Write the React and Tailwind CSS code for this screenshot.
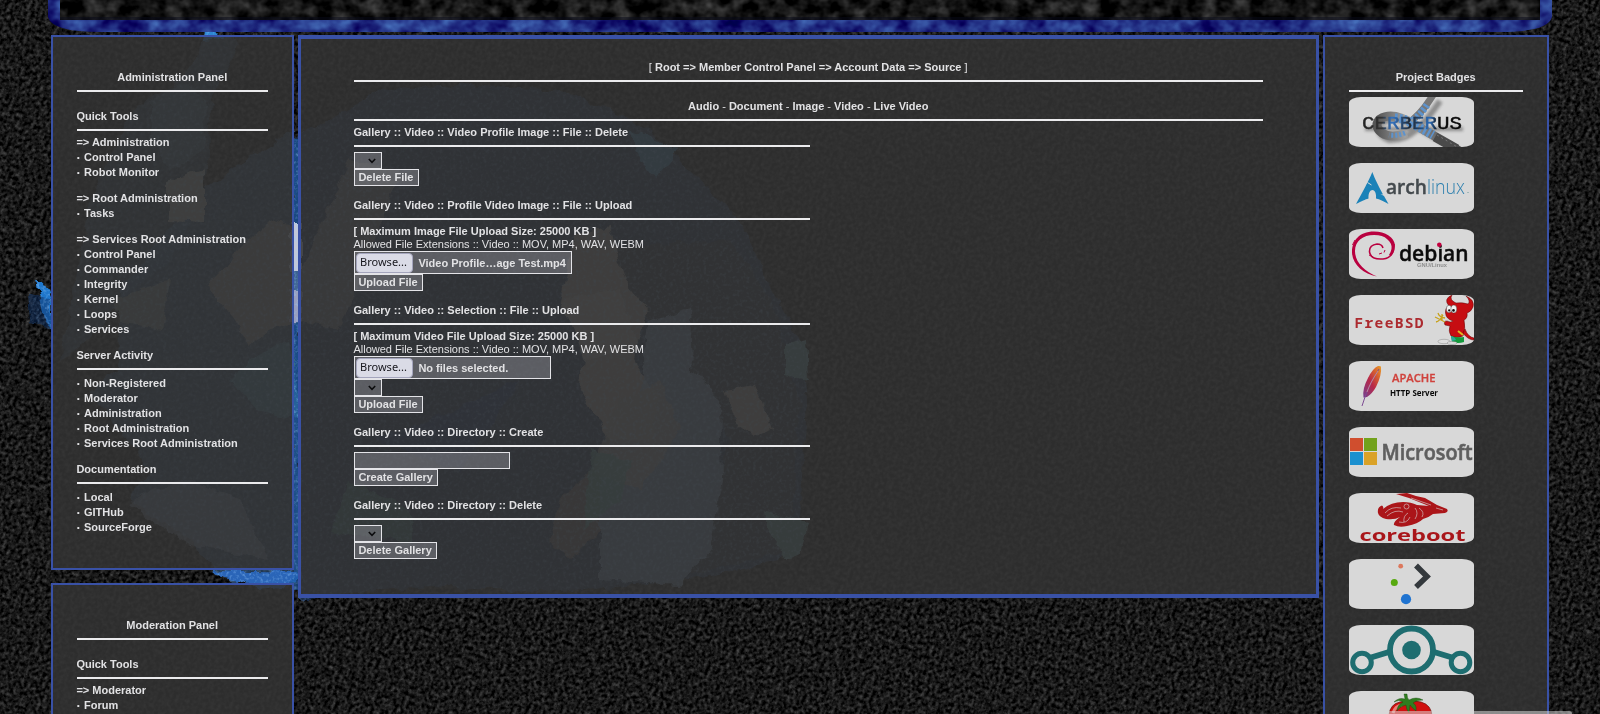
import React from "react";

const PANEL = "border-[#3951a6] bg-[#333333]/88";

function Rule() {
  return <div className="h-[2px] w-full shrink-0 bg-[#ebebed]" />;
}

function Line({ children, className = "" }) {
  return (
    <div className={"-ml-[0.6px] h-[15px] whitespace-nowrap leading-[15px] " + className}>{children}</div>
  );
}

function Title({ children }) {
  return (
    <div className="flex flex-col gap-[5px]">
      <Line className="text-center">{children}</Line>
      <Rule />
    </div>
  );
}

function Entry({ text }) {
  if (text.startsWith("=>")) {
    return <Line>{text}</Line>;
  }
  return (
    <Line className="flex">
      <span className="w-[7.6px] shrink-0 text-[13px]">·</span>
      {text}
    </Line>
  );
}

function Group({ heading, gap = "pb-[6px]", items }) {
  return (
    <section className="mt-[11px]">
      {heading && (
        <div className={gap}>
          <Line className="mb-[5px]">{heading}</Line>
          <Rule />
        </div>
      )}
      {items.map((t, i) => (
        <Entry key={i} text={t} />
      ))}
    </section>
  );
}

function NoiseBackdrop() {
  return (
    <svg className="absolute inset-0 h-full w-full" width="1600" height="714">
      <defs>
        <filter id="grain" x="0" y="0" width="100%" height="100%" colorInterpolationFilters="sRGB">
          <feTurbulence type="fractalNoise" baseFrequency="0.29 0.27" numOctaves="4" seed="4" />
          <feColorMatrix values="0.52 0.08 0 0 -0.205  0.52 0.08 0 0 -0.205  0.52 0.08 0 0 -0.205  0 0 0 0 1" />
        </filter>
        <filter id="paint" x="-10%" y="-10%" width="120%" height="120%" colorInterpolationFilters="sRGB">
          <feTurbulence type="fractalNoise" baseFrequency="0.07" numOctaves="3" seed="7" result="n" />
          <feDisplacementMap in="SourceGraphic" in2="n" scale="10" xChannelSelector="R" yChannelSelector="G" result="d" />
          <feTurbulence type="fractalNoise" baseFrequency="0.3" numOctaves="2" seed="9" result="t" />
          <feColorMatrix in="t" values="0 0 0 0 0.6  0 0 0 0 0.8  0 0 0 0 1  1.2 0 0 0 -0.58" result="spark" />
          <feComposite in="spark" in2="d" operator="in" result="s2" />
          <feMerge>
            <feMergeNode in="d" />
            <feMergeNode in="s2" />
          </feMerge>
        </filter>
        <filter id="rocks" x="0" y="0" width="100%" height="100%" colorInterpolationFilters="sRGB">
          <feTurbulence type="fractalNoise" baseFrequency="0.06 0.07" numOctaves="3" seed="12" />
          <feColorMatrix values="0.5 0 0 0 -0.165  0.5 0 0 0 -0.165  0.5 0 0 0 -0.165  0 0 0 0 1" />
        </filter>
        <filter id="blueRocks" x="0" y="0" width="100%" height="100%" colorInterpolationFilters="sRGB">
          <feTurbulence type="fractalNoise" baseFrequency="0.05 0.06" numOctaves="3" seed="21" />
          <feColorMatrix values="0.4 0 0 0 -0.07  0.7 0 0 0 -0.17  0.6 0 0 0 0.21  0 0 0 0 1" />
        </filter>
        <clipPath id="frame">
          <path d="M48 0H1552V17Q1548 32 1500 32H100Q52 32 48 17Z" />
        </clipPath>
      </defs>
      <g transform="rotate(24)">
        <rect x="-60" y="-700" width="1900" height="1420" filter="url(#grain)" />
      </g>
      <g filter="url(#paint)">
        <path d="M204 36L214 32L240 44L212 100L206 180L180 250L120 300L100 330L60 360L78 270L90 200L128 120L150 95L172 88L196 60Z" fill="#35587c" opacity=".5" />
        <path d="M204 30L214 28L222 38L202 40Z" fill="#2d86d4" />
        <path d="M36 278L42 282L52 302L54 330L44 318Z" fill="#1f77cc" />
        <path d="M28 292L50 300L54 330L30 322Z" fill="#0d2f63" opacity=".5" />
        <path d="M120 290L200 190L294 130L300 560L296 585L258 588L250 575L235 582L212 568L190 540L130 500L150 470L90 390L118 370Z" fill="#2f5580" opacity=".65" />
        <path d="M292 140L380 90L470 84L570 92L650 130L680 160L740 220L772 290L800 340L806 400L800 520L780 560L690 580L560 592L430 586L300 600Z" fill="#1d355c" opacity=".75" />
        <path d="M560 250L730 240L772 300L800 400L790 550L690 575L730 440L660 330Z" fill="#2b2b2b" opacity=".5" />
        <path d="M296 280L350 160L400 170L360 280L340 330L296 320Z" fill="#707074" opacity=".8" />
        <path d="M210 280L270 220L300 230L300 320L268 330L250 345L235 320L212 290Z" fill="#85807e" opacity=".8" />
        <path d="M168 180L205 170V222L168 220Z" fill="#8a8e8a" />
        <path d="M150 100L186 84L206 100L204 150L170 170L150 140Z" fill="#4e6f88" opacity=".5" />
        <path d="M112 300L170 280L162 330L120 322Z" fill="#717b78" opacity=".8" />
        <path d="M574 236L610 226L624 280L648 310L632 360L660 400L650 440L610 440L580 390L590 320L560 300Z" fill="#888481" />
        <path d="M560 300L620 290L640 350L585 360L574 330Z" fill="#9b9793" />
        <path d="M648 322L690 310L692 370L720 400L722 480L710 550L680 585L600 580L600 450L640 400Z" fill="#6f8aa8" opacity=".8" />
        <path d="M618 400L662 382L680 430L640 490L590 470Z" fill="#85827f" opacity=".8" />
        <path d="M560 500L600 460L600 530L570 560L548 540Z" fill="#75675f" opacity=".7" />
        <path d="M726 390L755 385L772 428L755 438L738 425Z" fill="#8a8580" />
        <path d="M785 345L806 338L808 380L785 374Z" fill="#54828a" />
        <path d="M590 450L630 460L620 500L584 530Z" fill="#4a8580" opacity=".8" />
        <path d="M764 510L808 524L800 555L786 560L766 530Z" fill="#4c7878" />
        <path d="M630 130L680 150L656 180L640 160Z" fill="#33709c" />
        <path d="M350 480L412 510L412 545L330 530Z" fill="#3c7570" opacity=".7" />
        <path d="M370 440L430 420L520 380L460 470Z" fill="#0f2c6e" opacity=".6" />
        <path d="M250 360L290 340L300 420L256 410L230 380Z" fill="#3f7a95" opacity=".7" />
        <path d="M150 490L130 505L190 545L270 560L240 500L190 480Z" fill="#7887a0" opacity=".6" />
        <path d="M210 570L296 572L296 584L262 590L240 580L224 577Z" fill="#2a65b8" />
        <path d="M292 140L300 140L300 590L292 590Z" fill="#1b5ca6" opacity=".6" />
        <path d="M290 222H302V270H290Z" fill="#c2c8d8" />
        <path d="M290 290H302V320H290Z" fill="#989fc0" />
      </g>
      <g clipPath="url(#frame)">
        <rect x="48" y="0" width="1504" height="32" filter="url(#blueRocks)" />
        <rect x="60" y="0" width="1480" height="20" filter="url(#rocks)" />
        <path d="M60 17H1540V20H60Z" fill="#080a1a" opacity=".5" />
      </g>
    </svg>
  );
}

function Select() {
  return (
    <div className="flex h-[17px] w-[28px] items-center justify-end border border-[#e4e4e8] bg-[#aeb0b8]/35 pr-[5px]">
      <svg width="8" height="6" viewBox="0 0 8 6" fill="none" stroke="#0c0c0e" strokeWidth="1.6">
        <path d="M.8 1L4 4.3L7.2 1" />
      </svg>
    </div>
  );
}

function Button({ children, width }) {
  return (
    <button
      className={
        "block h-[17px] whitespace-nowrap border border-[#e4e4e8] bg-[#aeb0b8]/35 pl-[3.4px] text-left font-bold leading-[15px] " +
        width
      }
    >
      {children}
    </button>
  );
}

function FileField({ children, width }) {
  return (
    <div className={"flex h-[23px] items-center gap-[5.4px] border border-[#e4e4e8] bg-[#aeb0b8]/35 pl-px " + width}>
      <div className="flex h-[20px] w-[57px] items-center justify-center rounded-[4px] border border-[#a4a5bd] bg-[#dadbe6] pr-[2px] font-['Noto_Sans',sans-serif] text-[11px] font-normal text-[#16161c]">
        Browse...
      </div>
      <span className="whitespace-nowrap pt-[2px]">{children}</span>
    </div>
  );
}

function Section({ title, children, first, limit }) {
  return (
    <section className={first ? "mt-[4px]" : "mt-[12px]"}>
      <div className="flex w-[456px] flex-col gap-[5px]">
        <Line>{title}</Line>
        <Rule />
      </div>
      {limit ? (
        <div className="-ml-[0.6px] h-[31px] pt-[4px] leading-[13px]">
          <div className="h-[13px] leading-[15px]">[ Maximum {limit} File Upload Size: 25000 KB ]</div>
          <div className="h-[13px] font-normal leading-[15px]">
            Allowed File Extensions :: Video :: MOV, MP4, WAV, WEBM
          </div>
        </div>
      ) : (
        <div className="h-[5px]" />
      )}
      {children}
    </section>
  );
}

function Badge({ children }) {
  return (
    <svg width="125" height="50" viewBox="0 0 125 50" className="block shrink-0 overflow-hidden rounded-[12px/6px] bg-[#d8d8d8]">
      {children}
    </svg>
  );
}

const Cerberus = () => (
  <Badge>
    <defs>
      <linearGradient id="cg" x1="0" x2="1">
        <stop offset="0" stopColor="#222" />
        <stop offset=".2" stopColor="#333" />
        <stop offset=".3" stopColor="#3274c4" />
        <stop offset=".48" stopColor="#20262e" />
        <stop offset=".68" stopColor="#2a6cba" />
        <stop offset=".76" stopColor="#0a0a0a" />
        <stop offset="1" stopColor="#0a0a0a" />
      </linearGradient>
      <linearGradient id="tail" x1="0" x2="1">
        <stop offset="0" stopColor="#555" />
        <stop offset=".35" stopColor="#a0a0a0" />
        <stop offset="1" stopColor="#444" />
      </linearGradient>
      <filter id="soft" x="-20%" y="-40%" width="140%" height="180%">
        <feGaussianBlur stdDeviation="1.8" />
      </filter>
    </defs>
    <g fill="none" filter="url(#soft)" opacity=".45">
      <path d="M91 4C76 26 62 44 40 43Q28 38 30 28Q44 17 66 29L115 57" stroke="#333" strokeWidth="6" />
      <path d="M16 32H114" stroke="#333" strokeWidth="4" />
    </g>
    <g fill="none">
      <path d="M84 -2Q72 18 58 27" stroke="#777" strokeWidth="7" />
      <path d="M58 36Q42 42 33 36Q24 29 31 22Q44 14 66 28L108 52" stroke="url(#tail)" strokeWidth="9" />
      <path d="M78 8Q70 20 58 28" stroke="#5d93cd" strokeWidth="7" strokeDasharray="2.500 2" />
      <path d="M56 36Q48 39 40 38" stroke="#5d93cd" strokeWidth="5" strokeDasharray="2 2" />
      <path d="M46 21Q56 21 66 28L84 38" stroke="#5d93cd" strokeWidth="9" strokeDasharray="2.500 2" />
      <path d="M86 40L112 55" stroke="#4a4a4a" strokeWidth="9" />
      <path d="M88 38L110 51" stroke="#777" strokeWidth="1" strokeDasharray="2 3" />
    </g>
    <text x="13" y="32" fontFamily="'Liberation Mono','DejaVu Sans Mono',monospace" fontSize="19" fontWeight="400" textLength="100" lengthAdjust="spacingAndGlyphs" fill="url(#cg)" stroke="url(#cg)" strokeWidth=".4">CERBERUS</text>
  </Badge>
);

const Arch = () => (
  <Badge>
    <path d="M23.300 9C21 15 18 21 7 41C13 38 16 36.500 19.500 35.500C19.300 30 21 27 23.500 27C26 27 27.500 31 27 35.500C31 36.500 34 38 39.500 41L35 33L31.500 31L34 31.500C29 22 26 16 23.300 9Z" fill="#1b82b8" />
    <path d="M18.500 19.500L22.500 22" stroke="#d8d8d8" strokeWidth="1" />
    <text x="37" y="30.500" fontFamily="'Open Sans','Noto Sans',sans-serif" fontSize="19.500" fontWeight="600" textLength="41" lengthAdjust="spacingAndGlyphs" fill="#444a4e" stroke="#444a4e" strokeWidth=".4">arch</text>
    <text x="78" y="30.500" fontFamily="'Open Sans',sans-serif" fontSize="19.500" fontWeight="300" textLength="38" lengthAdjust="spacingAndGlyphs" fill="#2c7fae">linux</text>
    <path d="M118 29.500H120" stroke="#8aa" strokeWidth=".7" />
  </Badge>
);

const Debian = () => (
  <Badge>
    <path d="M44 21C50 12 39 2.500 25 2.500C10 2.500 3 12 3 23C3 35 14 45 28 47.500C15 42 6 33 6 22C6 12 14 6 25 6C37 6 42 12 44 21Z" fill="#b9003f" />
    <path d="M45 15Q45 29 34 30Q22 31 20.500 23Q20 16 28 15Q33 15 34 19" fill="none" stroke="#b9003f" strokeWidth="1.500" />
    <path d="M45 13Q47.500 22 42 27L40 26Q44 20 42 12Z" fill="#b9003f" />
    <path d="M3.500 16L6 11M20 26L24 28M30 25L33 24M35 23.500L36 21" stroke="#b9003f" strokeWidth="1" />
    <text x="50" y="32" fontFamily="'Noto Sans','Open Sans',sans-serif" fontSize="22.500" fontWeight="500" textLength="69.500" lengthAdjust="spacingAndGlyphs" fill="#0b0b0b" stroke="#0b0b0b" strokeWidth=".5">debian</text>
    <circle cx="90.300" cy="15.700" r="2.300" fill="#c4003f" />
    <text x="68" y="38" fontFamily="'Liberation Sans',sans-serif" fontSize="4.500" textLength="30" lengthAdjust="spacingAndGlyphs" fill="#8d8d8d">GNU/Linux</text>
  </Badge>
);

const FreeBSD = () => (
  <Badge>
    <text x="5.500" y="32.500" fontFamily="'Noto Sans Mono','DejaVu Sans Mono',monospace" fontSize="14.500" fontWeight="700" textLength="69" lengthAdjust="spacing" fill="#ac2a2f">FreeBSD</text>
    <g fill="#c60d12" stroke="#5e0808" strokeWidth=".5">
      <path d="M100 11Q94 4 103 0Q100 5 107 8Q113 7 119 9Q122 6 117 1Q126 5 124 12Q122 17 118 18Q119 23 115 25Q117 34 114 41Q108 44 102 41Q99 36 101 31L96 30Q94 26 98 26Q102 28 104 26Q97 24 96.500 18Q96 13 100 11Z" />
      <path d="M114 38Q119 45 125 45V43Q119 42 116 34Z" />
    </g>
    <ellipse cx="100" cy="14" rx="2.700" ry="3.800" fill="#f2f2f2" stroke="#222" strokeWidth=".4" />
    <ellipse cx="104.800" cy="14" rx="3" ry="4" fill="#f2f2f2" stroke="#222" strokeWidth=".4" />
    <circle cx="100.200" cy="15.400" r="1.100" fill="#111" />
    <circle cx="104.500" cy="15.400" r="1.300" fill="#111" />
    <path d="M86 22L96 27M89 18Q90 22 96 23M87 27Q91 26 94 20M93 19L93 26" stroke="#c7a21f" strokeWidth="1.300" fill="none" />
    <path d="M109 36L114 40" stroke="#e0b820" strokeWidth="2" />
    <path d="M102 41Q109 43 115 42L115 47Q109 49 103 47Z" fill="#149b3c" />
    <path d="M102 41Q106 42 107 45L103 46Z" fill="#28a99a" />
    <ellipse cx="95" cy="46.500" rx="6" ry="2.200" fill="#dedede" stroke="#888" strokeWidth=".5" />
    <ellipse cx="103" cy="48" rx="5" ry="1.500" fill="#dedede" stroke="#888" strokeWidth=".5" />
  </Badge>
);

const Apache = () => (
  <Badge>
    <defs>
      <linearGradient id="fg" x1="1" y1="0" x2="0" y2="1">
        <stop offset="0" stopColor="#e8a02c" />
        <stop offset=".25" stopColor="#d8622e" />
        <stop offset=".55" stopColor="#b8284a" />
        <stop offset="1" stopColor="#74408e" />
      </linearGradient>
    </defs>
    <path d="M32 6Q33 14 27 26Q23 33 18 36L14.500 36.500Q13 28 19 17Q24 7 29 5Q32 4.500 32 6Z" fill="url(#fg)" />
    <path d="M30 8Q22 20 17 33L13 45" fill="none" stroke="#7d4b93" strokeWidth="1" />
    <path d="M29 10Q21 22 18 31" fill="none" stroke="#e4b3a8" strokeWidth=".6" />
    <text x="43" y="21" fontFamily="'Open Sans','Noto Sans',sans-serif" fontSize="11.500" fontWeight="600" textLength="43.500" lengthAdjust="spacingAndGlyphs" fill="#d0423c" stroke="#d0423c" strokeWidth=".3">APACHE</text>
    <text x="41" y="35" fontFamily="'Open Sans','Noto Sans',sans-serif" fontSize="8.500" fontWeight="700" textLength="48" lengthAdjust="spacingAndGlyphs" fill="#090909">HTTP Server</text>
  </Badge>
);

const Microsoft = () => (
  <Badge>
    <path d="M1 11H14V24H1Z" fill="#d04e2e" />
    <path d="M15 11H28V24H15Z" fill="#72a21c" />
    <path d="M1 25H14V38H1Z" fill="#1c90cf" />
    <path d="M15 25H28V38H15Z" fill="#daa227" />
    <text x="32.500" y="33" fontFamily="'Open Sans','Noto Sans',sans-serif" fontSize="22" fontWeight="600" textLength="91" lengthAdjust="spacingAndGlyphs" fill="#5f5f5f" stroke="#5f5f5f" strokeWidth=".6">Microsoft</text>
  </Badge>
);

const Coreboot = () => (
  <Badge>
    <g fill="#ab1519">
      <path d="M29 20Q28 14 33 12.500Q35 14 34 16Q42 9 54 9Q62 9 68 12L80 13L60 5L47 1L58 0L67 3L76 5L88 12L98 16Q100 19 96 20L84 21Q79 25 74 26Q69 31 58 33Q50 35 45 32Q44 29 51 24Q46 27 37 26Q30 24 29 20Z" />
    </g>
    <g fill="none" stroke="#d8d8d8" strokeWidth=".6">
      <path d="M36 20Q42 13 52 15M38 23Q46 16 54 19M50 29Q58 31 61 24M55 29Q54 23 59 20M66 15Q70 20 66 26M70 15Q76 19 73 24M62 5L82 12M87 15L94 17" />
      <circle cx="57.500" cy="13.500" r="2.500" />
    </g>
    <text x="10.500" y="48" fontFamily="'Open Sans','Noto Sans',sans-serif" fontSize="16" fontWeight="700" textLength="106" lengthAdjust="spacingAndGlyphs" fill="#a9161a">coreboot</text>
  </Badge>
);

const Neon = () => (
  <Badge>
    <circle cx="51.700" cy="7.200" r="2.400" fill="#dc785d" />
    <circle cx="45.300" cy="23.500" r="3.500" fill="#57a90f" />
    <circle cx="57" cy="40.200" r="5.100" fill="#1f73d0" />
    <path d="M67 6.500L78 17.500L67 28" fill="none" stroke="#34393d" strokeWidth="5.500" />
  </Badge>
);

const Lineage = () => (
  <Badge>
    <g fill="none" stroke="#1e6d70">
      <path d="M22 32.500L40 27M85 27L103 32.500" strokeWidth="5.500" />
      <circle cx="62.500" cy="25" r="21.500" strokeWidth="5.800" />
      <circle cx="13" cy="37.500" r="9.300" strokeWidth="5" />
      <circle cx="111.500" cy="37.500" r="9.300" strokeWidth="5" />
    </g>
    <circle cx="62.500" cy="25" r="9.300" fill="#1e6d70" />
  </Badge>
);

const Tomato = () => (
  <Badge>
    <path d="M40 24Q41 13 51 11Q61 8 72 11Q83 14 83 26Q82 44 62 46Q42 44 40 24Z" fill="#d0100f" stroke="#6b0b08" strokeWidth=".7" />
    <path d="M44 22Q46 15 53 14" stroke="#e98078" strokeWidth="3" fill="none" />
    <path d="M55 3L58 3Q58 7 60 9Q67 5 74 9Q67 9 64 12Q68 14 67 20Q63 17 61 14L60 22Q57 18 57 14Q51 15 48 20Q48 14 54 11Q50 8 45 11Q50 6 56 8Z" fill="#2f7d1f" stroke="#1a4d12" strokeWidth=".4" />
  </Badge>
);

const ADMIN = [
  { items: ["=> Root Administration", "Tasks"] },
  {
    items: [
      "=> Services Root Administration",
      "Control Panel",
      "Commander",
      "Integrity",
      "Kernel",
      "Loops",
      "Services",
    ],
  },
  {
    heading: "Server Activity",
    items: ["Non-Registered", "Moderator", "Administration", "Root Administration", "Services Root Administration"],
  },
  { heading: "Documentation", items: ["Local", "GITHub", "SourceForge"] },
];

export default function App() {
  return (
    <div className="relative h-[714px] w-[1600px] overflow-hidden bg-[#101010] font-['Liberation_Sans',Arial,sans-serif] text-[11px] font-bold text-[#e2e2e4]">
      <NoiseBackdrop />
      <div className="relative flex h-full items-start pl-[51px] pt-[35px]">
        <aside className="mr-[4px] flex w-[243px] flex-col gap-[13px]">
          <div className={"h-[535px] border-2 px-[24px] pt-[33px] " + PANEL}>
            <Title>Administration Panel</Title>
            <div className="h-[6px]" />
            <Group heading="Quick Tools" gap="pb-[4px]" items={["=> Administration", "Control Panel", "Robot Monitor"]} />
            {ADMIN.map((g, i) => (
              <Group key={i} {...g} />
            ))}
          </div>
          <div className={"h-[300px] border-2 px-[24px] pt-[33px] " + PANEL}>
            <Title>Moderation Panel</Title>
            <div className="h-[6px]" />
            <Group heading="Quick Tools" gap="pb-[4px]" items={["=> Moderator", "Forum"]} />
          </div>
        </aside>

        <main className={"mr-[4px] h-[563px] w-[1021px] border-x-[3px] border-y-4 px-[53px] pt-[21px] " + PANEL}>
          <div className="flex flex-col gap-[5px]">
            <Line className="text-center">
              <span className="font-normal">[ </span>
              {"Root => Member Control Panel => Account Data => Source"}
              <span className="font-normal"> ]</span>
            </Line>
            <Rule />
          </div>
          <div className="mt-[17px] flex flex-col gap-[5px]">
            <Line className="text-center">
              {["Audio", "Document", "Image", "Video", "Live Video"].map((t, i) => (
                <React.Fragment key={t}>
                  {i > 0 && <span className="font-normal"> - </span>}
                  {t}
                </React.Fragment>
              ))}
            </Line>
            <Rule />
          </div>
          <Section first title="Gallery :: Video :: Video Profile Image :: File :: Delete">
            <Select />
            <Button width="w-[65px]">Delete File</Button>
          </Section>
          <Section title="Gallery :: Video :: Profile Video Image :: File :: Upload" limit="Image">
            <FileField width="w-[218px]">Video Profile…age Test.mp4</FileField>
            <Button width="w-[69px]">Upload File</Button>
          </Section>
          <Section title="Gallery :: Video :: Selection :: File :: Upload" limit="Video">
            <FileField width="w-[197px]">No files selected.</FileField>
            <Select />
            <Button width="w-[69px]">Upload File</Button>
          </Section>
          <Section title="Gallery :: Video :: Directory :: Create">
            <input className="block h-[17px] w-[156px] border border-[#e4e4e8] bg-[#aeb0b8]/35" />
            <Button width="w-[84px]">Create Gallery</Button>
          </Section>
          <Section title="Gallery :: Video :: Directory :: Delete">
            <Select />
            <Button width="w-[83px]">Delete Gallery</Button>
          </Section>
        </main>

        <aside className={"h-[740px] w-[226px] border-2 px-[24px] pt-[33px] " + PANEL}>
          <Title>Project Badges</Title>
          <div className="mt-[5px] flex flex-col gap-[16px]">
            <Cerberus />
            <Arch />
            <Debian />
            <FreeBSD />
            <Apache />
            <Microsoft />
            <Coreboot />
            <Neon />
            <Lineage />
            <Tomato />
          </div>
        </aside>
      </div>
      <div className="absolute bottom-0 left-[1368px] h-[3px] w-[204px] rounded-t-[3px] bg-[#d8d8d8]/55" />
    </div>
  );
}
